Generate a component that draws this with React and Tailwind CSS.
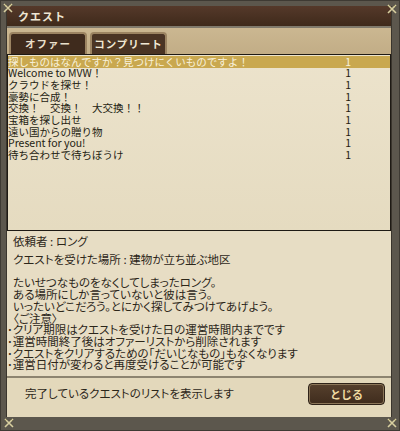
import React from 'react';

const quests = [
  '探しものはなんですか？見つけにくいものですよ！',
  'Welcome to MVW！',
  'クラウドを探せ！',
  '豪勢に合成！',
  '交換！　交換！　大交換！！',
  '宝箱を探し出せ',
  '遠い国からの贈り物',
  'Present for you!',
  '待ち合わせで待ちぼうけ',
];

const Corner = ({ className }) => (
  <svg viewBox="0 0 10 10" className={`absolute w-[10px] h-[10px] ${className}`}>
    <path d="M1 1 L9 9 M9 1 L1 9" stroke="#d8cfa0" strokeWidth="1.6" />
    <path d="M1 3 L3 1 M7 1 L9 3" stroke="#8a8258" strokeWidth="1" />
  </svg>
);

const App = () => {
  return (
    <div
      className="relative w-[400px] h-[431px] bg-[#5c574d] pl-[5px] pr-[7px] pt-[5px] pb-[13px] border border-[#3e3a33]"
      style={{ fontFamily: '"Noto Sans CJK JP", "Noto Sans", sans-serif' }}
    >
      <Corner className="left-[2px] top-[2px]" />
      <Corner className="right-[2px] top-[3px]" />
      <Corner className="left-[3px] bottom-[2px]" />
      <Corner className="right-[2px] bottom-[2px]" />

      <div className="flex flex-col h-full border-x border-[#3a352d]">
        {/* title bar */}
        <div className="h-[22px] shrink-0 bg-gradient-to-b from-[#55392a] to-[#3f2a1b] flex items-center pl-[11px] border-b-2 border-[#807a6c]">
          <span className="text-[11px] font-bold text-[#efe6d4] tracking-[1px]">クエスト</span>
        </div>

        {/* tabs */}
        <div className="h-[26px] shrink-0 bg-gradient-to-b from-[#cbb791] to-[#c2ad86] flex items-end gap-[3px] pl-[2px]">
          <div className="w-[78px] h-[22px] rounded-t-[4px] border-2 border-b-0 border-[#9c8462] bg-[#3f2b1d] flex items-center justify-center">
            <span className="text-[10.5px] font-bold text-[#e9dfca] tracking-[1px]">オファー</span>
          </div>
          <div className="w-[77px] h-[22px] rounded-t-[4px] border-2 border-b-0 border-[#9c8462] bg-[#4a3424] flex items-center justify-center">
            <span className="text-[10.5px] font-bold text-[#f1e8d4] tracking-[1px]">コンプリート</span>
          </div>
        </div>

        {/* quest list */}
        <div className="h-[177px] shrink-0 border border-[#1e1a14] bg-gradient-to-b from-[#ece3cc] to-[#e5dbc0] pt-[1px]">
          {quests.map((q, i) => (
            <div
              key={q}
              className={`h-[11.7px] flex items-center justify-between pr-[39px] ${
                i === 0 ? 'bg-[#c9a84f] text-[#f8f1dc]' : 'text-[#241d12]'
              }`}
            >
              <span className="text-[10.5px] leading-none">{q}</span>
              <span className="text-[10.5px] leading-none">1</span>
            </div>
          ))}
        </div>

        {/* details */}
        <div className="flex-1 bg-[#e7ddc4] pl-[6px] pt-[5px] text-[11.5px] leading-[11.7px] text-[#2c2619] [font-feature-settings:'palt']">
          <div>依頼者 : ロング</div>
          <div className="mt-[6px]">クエストを受けた場所 : 建物が立ち並ぶ地区</div>
          <div className="mt-[12px]">たいせつなものをなくしてしまったロング。</div>
          <div>ある場所にしか言っていないと彼は言う。</div>
          <div>いったいどこだろう。とにかく探してみつけてあげよう。</div>
          <div>〈ご注意〉</div>
          <div className="-ml-[6px]">･クリア期限はクエストを受けた日の運営時間内までです</div>
          <div className="-ml-[6px]">･運営時間終了後はオファーリストから削除されます</div>
          <div className="-ml-[6px]">･クエストをクリアするための「だいじなもの」もなくなります</div>
          <div className="-ml-[6px]">･運営日付が変わると再度受けることが可能です</div>
        </div>

        {/* footer */}
        <div className="h-[41px] shrink-0 border-t-2 border-[#8d8470] bg-[#e3d8bb] flex items-start justify-between pl-[18px] pr-[6px] pt-[5px]">
          <span className="text-[11.5px] text-[#2c2619] mt-[2px] [font-feature-settings:'palt']">完了しているクエストのリストを表示します</span>
          <button className="w-[77px] h-[22px] rounded-[4px] border border-[#2e2218] shadow-[inset_0_0_0_1px_#8b7659] bg-gradient-to-b from-[#56402d] to-[#3f2c1d] text-[11px] font-bold text-[#f0dca2]">
            とじる
          </button>
        </div>
      </div>
    </div>
  );
};

export default App;
